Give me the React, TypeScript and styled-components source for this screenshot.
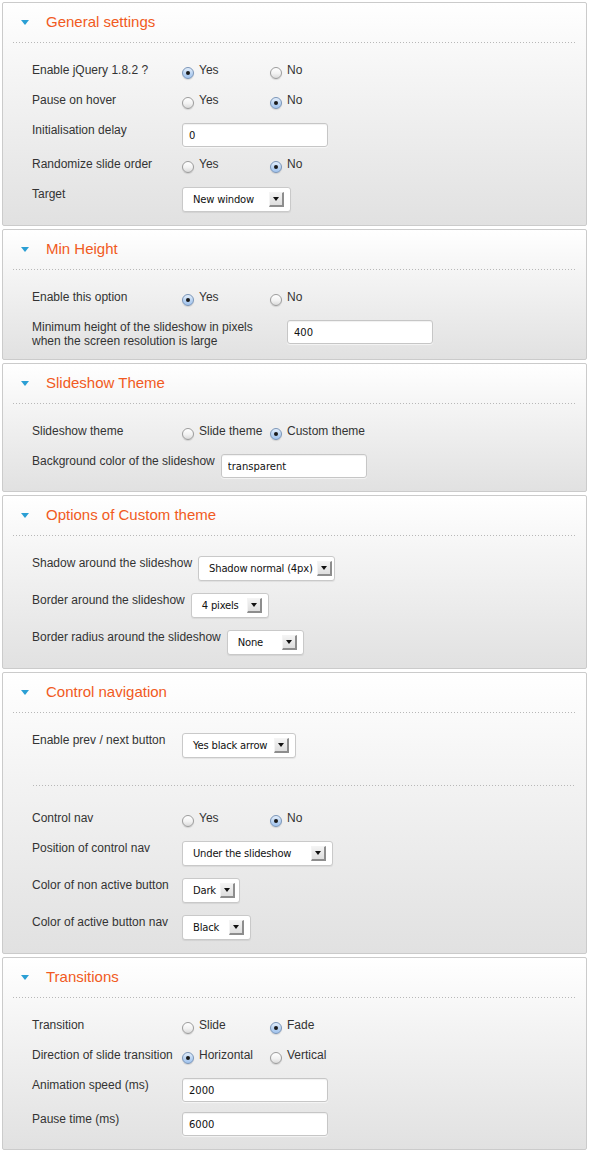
import React from 'react';
import styled, { createGlobalStyle } from 'styled-components';

const GlobalStyle = createGlobalStyle`
  html, body { margin: 0; padding: 0; background: #fff; }
  body { font-family: "Liberation Sans", Arial, Helvetica, sans-serif; }
`;

const Page = styled.div`
  padding: 2px 5px 2px 2px;
  display: flex;
  flex-direction: column;
  gap: 3px;
`;

const Panel = styled.section`
  border: 1px solid #cbcbcb;
  border-radius: 2px;
  background: linear-gradient(to bottom, #ffffff 0%, #f4f4f4 35%, #e1e1e1 100%);
`;

const Header = styled.div`
  height: 39px;
  box-sizing: border-box;
  display: flex;
  align-items: center;
  padding: 0 0 2px 18px;
`;

const Caret = styled.span`
  width: 0;
  height: 0;
  border-left: 4.5px solid transparent;
  border-right: 4.5px solid transparent;
  border-top: 5px solid #2b9fd4;
  margin-right: 17px;
  margin-top: 1px;
`;

const Title = styled.h2`
  margin: 0;
  font-size: 15px;
  font-weight: normal;
  line-height: 18px;
  color: #f15a22;
`;

const Dotted = styled.div`
  height: 1px;
  background-image: linear-gradient(to right, #b8b8b8 1px, transparent 1px);
  background-size: 3px 1px;
`;

const Rule = styled(Dotted)`
  margin: 0 10px;
`;

const Divider = styled(Dotted)`
  margin: 15px 0 25px 1px;
`;

const Body = styled.div<{ $pb: number }>`
  padding: 20px 10px ${p => p.$pb}px 29px;
`;

const rowHeights = { radio: 30, input: 34, select: 37 } as const;
type RowKind = keyof typeof rowHeights;

const Row = styled.div<{ $kind: RowKind }>`
  display: flex;
  align-items: flex-start;
  min-height: ${p => rowHeights[p.$kind]}px;
  &:last-child { min-height: 0; }
`;

const Label = styled.div<{ $min?: number }>`
  flex-shrink: 0;
  min-width: ${p => p.$min ?? 150}px;
  box-sizing: border-box;
  padding-right: 6px;
  font-size: 12px;
  line-height: 14px;
  color: #333;
  white-space: nowrap;
`;

const Options = styled.div`
  display: flex;
`;

const Option = styled.label`
  display: inline-flex;
  align-items: flex-start;
  min-width: 88px;
  font-size: 12px;
  line-height: 14px;
  color: #333;
`;

const Radio = styled.span<{ $on?: boolean }>`
  position: relative;
  width: 12px;
  height: 12px;
  box-sizing: border-box;
  margin: 4px 5px 0 0;
  border-radius: 50%;
  border: 1px solid ${p => (p.$on ? '#7a95b8' : '#9c9c9c')};
  background: ${p =>
    p.$on
      ? 'linear-gradient(to bottom, #e3eefb 0%, #b6d1f1 60%, #a3c4ee 100%)'
      : 'linear-gradient(to bottom, #ffffff 0%, #f2f2f2 55%, #dadada 100%)'};
  box-shadow: 0 1px 1px rgba(0, 0, 0, 0.12);
  &::after {
    content: '';
    display: ${p => (p.$on ? 'block' : 'none')};
    position: absolute;
    left: 3px;
    top: 3px;
    width: 4px;
    height: 4px;
    border-radius: 50%;
    background: #1a1a1a;
  }
`;

const TextField = styled.input`
  width: 146px;
  height: 24px;
  box-sizing: border-box;
  margin: 0;
  padding: 0 6px;
  border: 1px solid #c6c6c6;
  border-radius: 3px;
  background: #fff;
  box-shadow: inset 0 1px 1px rgba(0, 0, 0, 0.06), 0 1px 1px rgba(255, 255, 255, 0.6);
  font-family: "DejaVu Sans", Verdana, sans-serif;
  font-size: 10px;
  color: #111;
  outline: none;
`;

const Select = styled.div<{ $w: number }>`
  width: ${p => p.$w}px;
  height: 25px;
  box-sizing: border-box;
  display: flex;
  align-items: center;
  justify-content: space-between;
  padding: 0 6px 0 10px;
  border: 1px solid #c9c9c9;
  border-radius: 3px;
  background: #fff;
  box-shadow: 0 1px 1px rgba(0, 0, 0, 0.07);
  font-family: "DejaVu Sans", Verdana, sans-serif;
  font-size: 10px;
  letter-spacing: -0.2px;
  color: #111;
  white-space: nowrap;
`;

const Arrow = styled.span`
  flex-shrink: 0;
  width: 15px;
  height: 15px;
  margin-left: 4px;
  box-sizing: border-box;
  display: flex;
  align-items: center;
  justify-content: center;
  border-top: 1px solid #f4f4f4;
  border-left: 1px solid #f4f4f4;
  border-right: 2px solid #8d8d8d;
  border-bottom: 2px solid #8d8d8d;
  background: linear-gradient(to bottom, #f3f3f3, #dedede);
  &::after {
    content: '';
    width: 0;
    height: 0;
    border-left: 3px solid transparent;
    border-right: 3px solid transparent;
    border-top: 4px solid #111;
  }
`;

const RadioPair: React.FC<{ items: string[]; on: number }> = ({ items, on }) => (
  <Options>
    {items.map((t, i) => (
      <Option key={t}>
        <Radio $on={i === on} />
        {t}
      </Option>
    ))}
  </Options>
);

const Dropdown: React.FC<{ w: number; value: string }> = ({ w, value }) => (
  <Select $w={w} role="combobox">
    <span>{value}</span>
    <Arrow />
  </Select>
);

const Section: React.FC<{ title: string; pb?: number; children: React.ReactNode }> = ({
  title,
  pb = 13,
  children,
}) => (
  <Panel>
    <Header>
      <Caret />
      <Title>{title}</Title>
    </Header>
    <Rule />
    <Body $pb={pb}>{children}</Body>
  </Panel>
);

export default function App() {
  return (
    <>
      <GlobalStyle />
      <Page>
        <Section title="General settings">
          <Row $kind="radio">
            <Label>Enable jQuery 1.8.2 ?</Label>
            <RadioPair items={['Yes', 'No']} on={0} />
          </Row>
          <Row $kind="radio">
            <Label>Pause on hover</Label>
            <RadioPair items={['Yes', 'No']} on={1} />
          </Row>
          <Row $kind="input">
            <Label>Initialisation delay</Label>
            <TextField readOnly value="0" />
          </Row>
          <Row $kind="radio">
            <Label>Randomize slide order</Label>
            <RadioPair items={['Yes', 'No']} on={1} />
          </Row>
          <Row $kind="select">
            <Label>Target</Label>
            <Dropdown w={109} value="New window" />
          </Row>
        </Section>

        <Section title="Min Height" pb={11}>
          <Row $kind="radio">
            <Label>Enable this option</Label>
            <RadioPair items={['Yes', 'No']} on={0} />
          </Row>
          <Row $kind="input">
            <Label $min={255}>
              Minimum height of the slideshow in pixels
              <br />
              when the screen resolution is large
            </Label>
            <TextField readOnly value="400" />
          </Row>
        </Section>

        <Section title="Slideshow Theme">
          <Row $kind="radio">
            <Label>Slideshow theme</Label>
            <RadioPair items={['Slide theme', 'Custom theme']} on={1} />
          </Row>
          <Row $kind="input">
            <Label>Background color of the slideshow</Label>
            <TextField readOnly value="transparent" />
          </Row>
        </Section>

        <Section title="Options of Custom theme">
          <Row $kind="select">
            <Label>Shadow around the slideshow</Label>
            <Dropdown w={137} value="Shadow normal (4px)" />
          </Row>
          <Row $kind="select">
            <Label>Border around the slideshow</Label>
            <Dropdown w={78} value="4 pixels" />
          </Row>
          <Row $kind="select">
            <Label>Border radius around the slideshow</Label>
            <Dropdown w={77} value="None" />
          </Row>
        </Section>

        <Section title="Control navigation">
          <Row $kind="select">
            <Label>Enable prev / next button</Label>
            <Dropdown w={114} value="Yes black arrow" />
          </Row>
          <Divider />
          <Row $kind="radio">
            <Label>Control nav</Label>
            <RadioPair items={['Yes', 'No']} on={1} />
          </Row>
          <Row $kind="select">
            <Label>Position of control nav</Label>
            <Dropdown w={151} value="Under the slideshow" />
          </Row>
          <Row $kind="select">
            <Label>Color of non active button</Label>
            <Dropdown w={58} value="Dark" />
          </Row>
          <Row $kind="select">
            <Label>Color of active button nav</Label>
            <Dropdown w={69} value="Black" />
          </Row>
        </Section>

        <Section title="Transitions">
          <Row $kind="radio">
            <Label>Transition</Label>
            <RadioPair items={['Slide', 'Fade']} on={1} />
          </Row>
          <Row $kind="radio">
            <Label>Direction of slide transition</Label>
            <RadioPair items={['Horizontal', 'Vertical']} on={0} />
          </Row>
          <Row $kind="input">
            <Label>Animation speed (ms)</Label>
            <TextField readOnly value="2000" />
          </Row>
          <Row $kind="input">
            <Label>Pause time (ms)</Label>
            <TextField readOnly value="6000" />
          </Row>
        </Section>
      </Page>
    </>
  );
}
